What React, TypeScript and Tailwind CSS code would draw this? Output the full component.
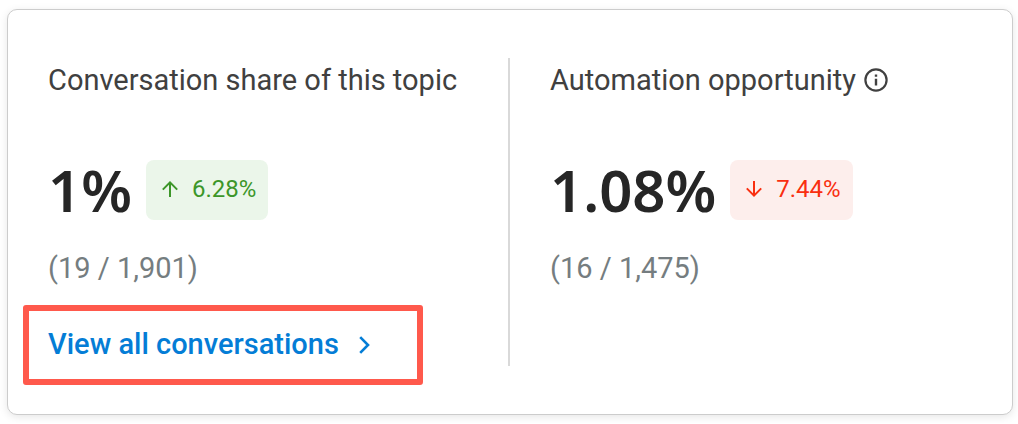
import type { ReactNode } from "react";

type Trend = "up" | "down";

const badgeTone: Record<Trend, string> = {
  up: "bg-[#ebf6ea] text-[#3c9629]",
  down: "bg-[#fdeeec] text-[#f92f10]",
};

function ArrowIcon({ trend }: { trend: Trend }) {
  return (
    <svg
      viewBox="0 0 16 16"
      className="size-4 shrink-0"
      fill="none"
      stroke="currentColor"
      strokeWidth="2"
      aria-hidden="true"
    >
      {trend === "up" ? (
        <path d="M8 16V1.6M0.8 8.6L8 1.4l7.2 7.2" />
      ) : (
        <path d="M8 0v14.4M0.8 7.4L8 14.6l7.2-7.2" />
      )}
    </svg>
  );
}

function InfoIcon() {
  return (
    <svg viewBox="0 0 24 24" className="size-6" aria-hidden="true">
      <circle cx="12" cy="12" r="10.6" fill="none" stroke="currentColor" strokeWidth="2.2" />
      <path d="M10.8 10.8h2.4v6.8h-2.4zM10.8 6.4h2.4v2.4h-2.4z" fill="currentColor" />
    </svg>
  );
}

interface MetricProps {
  title: string;
  info?: boolean;
  value: string;
  trend: Trend;
  change: string;
  detail: string;
  children?: ReactNode;
}

function Metric({ title, info, value, trend, change, detail, children }: MetricProps) {
  return (
    <section className="flex flex-col items-start">
      <div className="flex h-11 items-center gap-2 text-[#404040]">
        <h2 className="text-[29px] leading-11 whitespace-nowrap">{title}</h2>
        {info && (
          <button type="button" aria-label={`About ${title}`}>
            <InfoIcon />
          </button>
        )}
      </div>
      <div className="mt-14 flex h-16 items-center gap-3.5">
        <span className="font-['Noto_Sans',sans-serif] text-[58px] leading-16 font-semibold text-[#262626]">
          {value}
        </span>
        <span
          className={`flex h-15 items-center gap-3.5 rounded-lg pr-3 pb-0.5 pl-4 text-2xl whitespace-nowrap ${badgeTone[trend]}`}
        >
          <ArrowIcon trend={trend} />
          {change}
        </span>
      </div>
      <p className="mt-6 text-[29px] leading-11 text-[#757d80]">{detail}</p>
      {children}
    </section>
  );
}

export default function App() {
  return (
    <main className="bg-white pt-[9px] pr-[5px] pb-2 pl-[7px] font-[Roboto,sans-serif]">
      <div className="grid grid-cols-2 rounded-[10px] border border-[#cccccc] bg-white px-10 py-12 shadow-[0_2px_8px_rgba(0,0,0,0.1)]">
        <div className="border-r-2 border-[#d9d9d9]">
          <Metric
            title="Conversation share of this topic"
            value="1%"
            trend="up"
            change="6.28%"
            detail="(19 / 1,901)"
          >
            <a
              href="#conversations"
              className="relative mt-[34px] flex h-[42px] items-center gap-5 text-[29px] font-medium whitespace-nowrap text-[#047dd6]"
            >
              View all conversations
              <svg
                viewBox="0 0 11 18"
                className="h-[18px] w-[11px]"
                fill="none"
                stroke="currentColor"
                strokeWidth="2.6"
                aria-hidden="true"
              >
                <path d="M1.2 1.2L9 9l-7.8 7.8" />
              </svg>
              <span className="pointer-events-none absolute top-1/2 -left-[25px] h-20 w-[400px] -translate-y-1/2 rounded-[3px] border-6 border-[#ff594c]" />
            </a>
          </Metric>
        </div>
        <div className="pl-10">
          <Metric
            title="Automation opportunity"
            info
            value="1.08%"
            trend="down"
            change="7.44%"
            detail="(16 / 1,475)"
          />
        </div>
      </div>
    </main>
  );
}
